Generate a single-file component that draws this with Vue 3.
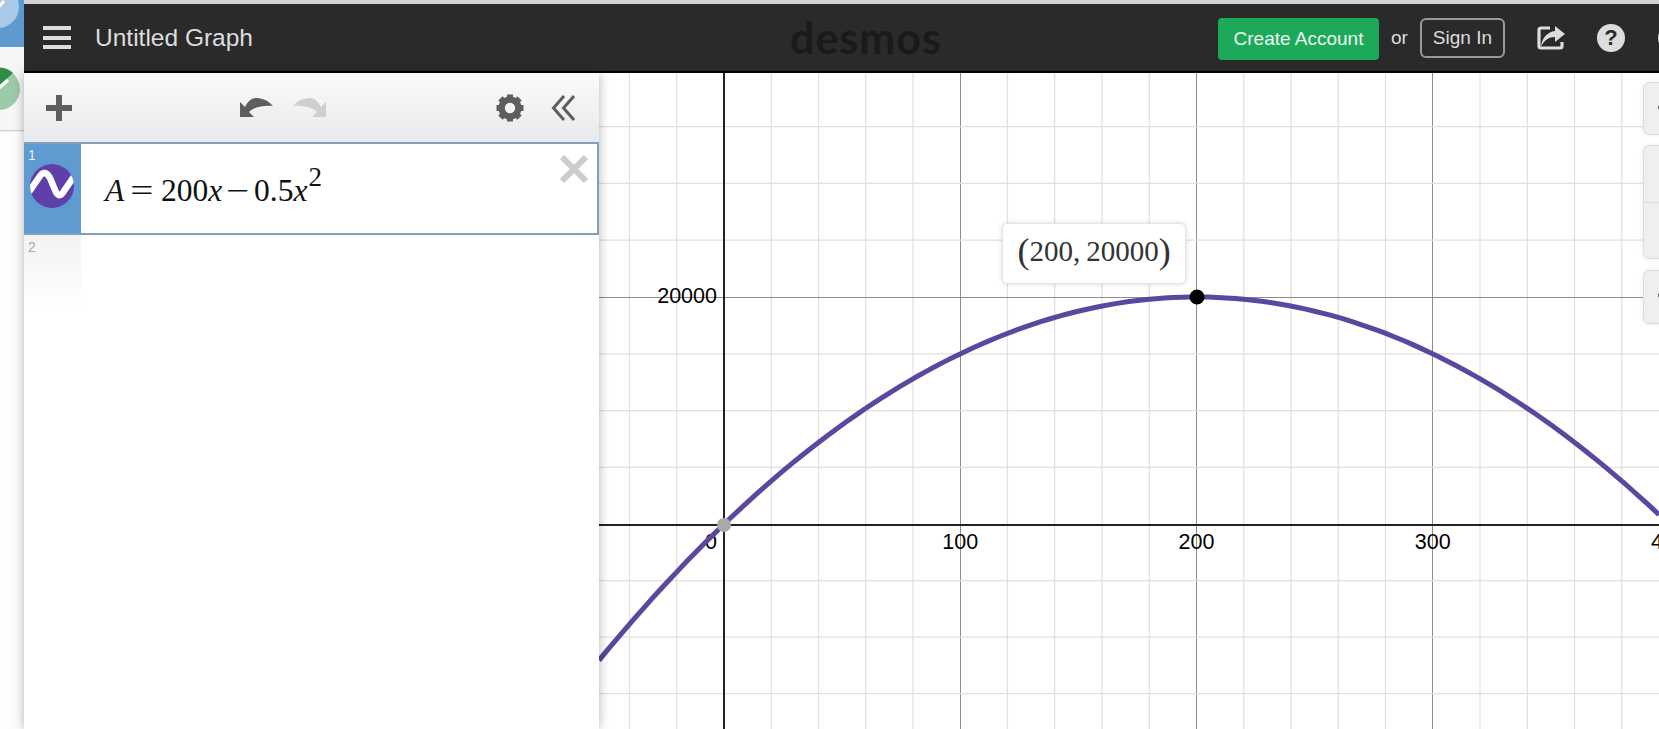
<script setup>
// graph paper is drawn in page coordinates, see the viewBox on the svg
const originX = 724
const originY = 524.2
const axisY = 525
const stepX = 47.25
const stepY = 56.8
const unitX = stepX / 20
const unitY = stepY / 5000

const range = (from, to) => {
  const out = []
  for (let i = from; i <= to; i++) out.push(i)
  return out
}

const vLines = range(-2, 20).filter(i => i !== 0).map(i => ({
  x: originX + i * stepX,
  major: i % 5 === 0
}))
const hLines = range(-3, 8).filter(i => i !== 0).map(i => ({
  y: originY - i * (i < 0 ? 56.5 : stepY),
  major: i % 4 === 0 && i > 0
}))

const xLabels = [100, 200, 300, 400].map(n => ({ n, x: originX + n * unitX }))

const curve = range(0, 120).map(i => {
  const px = 599 + (i / 120) * 1060
  const x = (px - originX) / unitX
  const a = 200 * x - 0.5 * x * x
  return px.toFixed(1) + ',' + (originY - a * unitY).toFixed(1)
}).join(' ')

const gearTeeth = [0, 45, 90, 135, 180, 225, 270, 315]
</script>

<template>
  <div class="app">
    <!-- neighbouring window, only a slice of it shows -->
    <svg class="strip" width="24" height="729" viewBox="0 0 24 729">
      <rect width="24" height="47" fill="#5e9ad0" />
      <rect y="47" width="24" height="84" fill="#f6f6f6" />
      <rect y="130" width="24" height="1.5" fill="#cfcfcf" />
      <rect y="131.5" width="24" height="598" fill="#fdfdfd" />
      <circle cx="-2" cy="7" r="21" fill="#a9c9e8" />
      <path d="M-2 8 L4 1" stroke="#fff" stroke-width="3" />
      <circle cx="-1" cy="89" r="21" fill="#9cc9a6" />
      <path d="M-14 72 A21 21 0 0 1 13 73 L-1 86 L-14 86 Z" fill="#2f8c47" />
      <path d="M-1 88 L8 80" stroke="#fff" stroke-width="3.5" />
    </svg>

    <div class="main">
      <header class="header">
        <div class="header-left">
          <div class="hamburger"><span></span><span></span><span></span></div>
          <span class="title">Untitled Graph</span>
        </div>
        <div class="logo">desmos</div>
        <div class="header-right">
          <button class="create">Create Account</button>
          <span class="or">or</span>
          <button class="signin">Sign In</button>
          <svg class="share" width="28" height="24" viewBox="0 0 28 24">
            <path d="M13 2 H4 Q2 2 2 4 V20 Q2 22 4 22 H23 Q25 22 25 20 V16" fill="none" stroke="#ddd" stroke-width="3.2" />
            <path d="M18 0 L28 8 L18 16 V11 C12 11 7 14 4 21 C5 12 10 6 18 5 Z" fill="#ddd" />
          </svg>
          <div class="help">?</div>
          <div class="user"></div>
        </div>
      </header>

      <div class="content">
        <aside class="panel">
          <div class="toolbar">
            <svg width="26" height="26" viewBox="0 0 26 26" class="add">
              <path d="M13 0 V26 M0 13 H26" stroke="#5e5e5e" stroke-width="6" />
            </svg>
            <div class="undo-redo">
              <svg width="33" height="20" viewBox="0 0 33 20">
                <path d="M0 4 L0 19 L14 19 L9 14 C14 9 24 7 33 8 C28 2 21 0 16 0 C12 0 8 3 5 9 Z" fill="#5e5e5e" />
              </svg>
              <svg class="redo" width="33" height="20" viewBox="0 0 33 20">
                <path d="M0 4 L0 19 L14 19 L9 14 C14 9 24 7 33 8 C28 2 21 0 16 0 C12 0 8 3 5 9 Z" fill="#cfcfcf" />
              </svg>
            </div>
            <svg class="gear" width="28" height="28" viewBox="-14 -14 28 28">
              <circle r="8.4" fill="none" stroke="#5e5e5e" stroke-width="6.4" />
              <rect v-for="a in gearTeeth" :key="a" x="-3" y="-13.5" width="6" height="6" fill="#5e5e5e" :transform="`rotate(${a})`" />
            </svg>
            <svg class="collapse" width="24" height="26" viewBox="0 0 24 26">
              <path d="M13 1 L2.5 13 L13 25 M23 1 L12.5 13 L23 25" fill="none" stroke="#5e5e5e" stroke-width="3" />
            </svg>
          </div>

          <div class="expr selected">
            <div class="gutter">
              <span class="num">1</span>
              <svg class="wave" width="44" height="44" viewBox="0 0 44 44">
                <defs>
                  <clipPath id="waveClip"><circle cx="22" cy="22" r="22" /></clipPath>
                </defs>
                <circle cx="22" cy="22" r="22" fill="#5f3fa8" />
                <path d="M-1 28 L10 12 Q15 5 20 14 L25 26 Q29 36 34 27 L45 11" fill="none" stroke="#fff" stroke-width="6.5" clip-path="url(#waveClip)" />
              </svg>
            </div>
            <div class="math">
              <i>A</i><span class="op">=</span><span>200</span><i>x</i><span class="op minus">−</span><span>0.5</span><i>x</i><sup>2</sup>
            </div>
            <svg class="close" width="28" height="28" viewBox="0 0 28 28">
              <path d="M2 2 L26 26 M26 2 L2 26" stroke="#cdcdcd" stroke-width="6" />
            </svg>
          </div>

          <div class="expr-empty">
            <div class="gutter-empty"><span class="num-empty">2</span></div>
          </div>
        </aside>

        <section class="graph">
          <svg class="paper" width="1060" height="656" viewBox="599 73 1060 656">
            <line v-for="l in vLines" :key="l.x" :class="{ major: l.major }" :x1="l.x" :x2="l.x" y1="73" y2="729" :stroke="l.major ? '#8c8c8c' : '#e0e0e0'" :stroke-width="l.major ? 1 : 1.2" />
            <line v-for="l in hLines" :key="l.y" :class="{ major: l.major }" x1="599" x2="1659" :y1="l.y" :y2="l.y" :stroke="l.major ? '#8c8c8c' : '#e0e0e0'" :stroke-width="l.major ? 1 : 1.2" />
            <line :x1="originX" :x2="originX" y1="73" y2="729" stroke="#222" stroke-width="2" />
            <line x1="599" x2="1659" :y1="axisY" :y2="axisY" stroke="#222" stroke-width="2" />

            <text class="tick" x="717" y="303" text-anchor="end">20000</text>
            <text class="tick" x="711" y="549" text-anchor="middle">0</text>
            <text v-for="t in xLabels" :key="t.n" class="tick" :x="t.x" y="549" text-anchor="middle">{{ t.n }}</text>

            <polyline :points="curve" fill="none" stroke="#5b479f" stroke-width="5" />
            <circle :cx="originX" :cy="axisY" r="7" fill="#a9a9a9" />
            <circle cx="1197" cy="297" r="7.5" fill="#000" />
          </svg>

          <div class="tooltip">
            <span class="paren">(</span>200,<span class="gap"></span>20000<span class="paren">)</span>
          </div>

          <div class="tool-group one"><span class="glyph"></span></div>
          <div class="tool-group two"><div></div><div></div></div>
          <div class="tool-group three"><span class="glyph"></span></div>
        </section>
      </div>
    </div>
  </div>
</template>

<style>
html, body {
  margin: 0;
  overflow: hidden;
  background: #fff;
}
</style>

<style scoped>
.app {
  display: flex;
  width: 1659px;
  height: 729px;
  overflow: hidden;
  font-family: "Liberation Sans", Arial, sans-serif;
}

.strip { flex: none; display: block; }

.main {
  flex: 1;
  min-width: 0;
  display: flex;
  flex-direction: column;
  border-top: 4px solid #d4d4d4;
}

/* header */
.header {
  flex: none;
  height: 67px;
  display: flex;
  align-items: center;
  background: #2a2a2a;
  border-bottom: 2px solid #000;
}

.header-left {
  flex: none;
  width: 766px;
  display: flex;
  align-items: center;
  padding-left: 19px;
  box-sizing: border-box;
  gap: 24px;
}

.hamburger {
  width: 28px;
  display: flex;
  flex-direction: column;
  gap: 5.5px;
}
.hamburger span { height: 4px; background: #ddd; }

.title {
  color: #ddd;
  font-size: 24.5px;
}

.logo {
  flex: none;
  width: 150px;
  color: #1a1a1a;
  font-family: Lato, sans-serif;
  font-size: 43px;
  font-weight: 700;
  line-height: 44px;
  letter-spacing: 1px;
  text-align: center;
}

.header-right {
  flex: none;
  display: flex;
  align-items: center;
  padding-left: 278px;
}

.create {
  flex: none;
  width: 161px;
  height: 42px;
  padding: 0;
  margin-top: 2px;
  background: #1ca95a;
  border: none;
  border-radius: 4px;
  color: #eef8f1;
  font: 19px "Liberation Sans", Arial, sans-serif;
}

.or {
  color: #ddd;
  font-size: 19px;
  margin: 0 12px;
}

.signin {
  flex: none;
  width: 85px;
  height: 40px;
  padding: 0;
  background: transparent;
  border: 2px solid #999;
  border-radius: 6px;
  color: #ddd;
  font: 19px "Liberation Sans", Arial, sans-serif;
}

.share { margin-left: 32px; flex: none; }

.help {
  flex: none;
  width: 28px;
  height: 28px;
  margin-left: 32px;
  border-radius: 50%;
  background: #ddd;
  color: #2a2a2a;
  font-size: 22px;
  font-weight: 700;
  line-height: 28px;
  text-align: center;
}

.user {
  flex: none;
  width: 28px;
  height: 28px;
  margin-left: 33px;
  border-radius: 50%;
  background: #ddd;
}

/* left panel */
.content {
  flex: 1;
  min-height: 0;
  display: flex;
}

.panel {
  flex: none;
  position: relative;
  z-index: 2;
  width: 575px;
  background: #fff;
  box-shadow: 0 0 10px rgba(0, 0, 0, 0.3);
}

.toolbar {
  height: 69px;
  display: flex;
  align-items: center;
  background: linear-gradient(#fbfbfb, #e8e9ec);
}

.add { margin-left: 22px; flex: none; }

.undo-redo {
  flex: none;
  display: flex;
  gap: 20px;
  margin-left: 168px;
}
.redo { transform: scaleX(-1); }

.gear { margin-left: 170px; flex: none; }
.collapse { margin-left: 27px; flex: none; }

.expr {
  position: relative;
  height: 93px;
  display: flex;
  box-sizing: border-box;
  border: solid #7f9fbb;
  border-width: 2px 2px 2px 0;
}

.gutter {
  position: relative;
  flex: none;
  width: 57px;
  background: #5f9bd1;
}

.num {
  position: absolute;
  top: 3px;
  left: 4px;
  color: #e4eef8;
  font-size: 14px;
}

.wave {
  position: absolute;
  top: 20px;
  left: 6px;
}

.math {
  margin-left: 24px;
  align-self: flex-end;
  margin-bottom: 25px;
  font-family: "Liberation Serif", "Times New Roman", serif;
  font-size: 31.5px;
  line-height: 34px;
  color: #111;
  white-space: nowrap;
}
.math i { font-style: italic; }
.math .op {
  display: inline-block;
  margin: 0 10px 0 9px;
  transform: scaleX(1.3);
}
.math .minus { margin: 0 7px; }
.math sup {
  font-size: 27px;
  line-height: 0;
  vertical-align: 15px;
  margin-left: 1px;
}

.close {
  position: absolute;
  top: 11px;
  right: 9px;
}

.expr-empty {
  height: 75px;
  display: flex;
}

.gutter-empty {
  width: 57px;
  background: linear-gradient(#f3f3f3, #fff);
}

.num-empty {
  display: block;
  padding: 4px 0 0 4px;
  color: #aaa;
  font-size: 14px;
}

/* graph */
.graph {
  position: relative;
  flex: 1;
  min-width: 0;
  overflow: hidden;
  background: #fff;
}

.paper { display: block; }
.major { shape-rendering: crispEdges; }

.tick {
  font-family: "Liberation Sans", Arial, sans-serif;
  font-size: 21.5px;
  fill: #000;
}

.tooltip {
  position: absolute;
  left: 403px;
  top: 150px;
  width: 184px;
  height: 61px;
  box-sizing: border-box;
  padding-bottom: 5px;
  display: flex;
  align-items: center;
  justify-content: center;
  background: #fff;
  border: 1px solid #e4e4e4;
  border-radius: 5px;
  box-shadow: 0 0 5px rgba(0, 0, 0, 0.15);
  font-family: "Liberation Serif", "Times New Roman", serif;
  font-size: 29px;
  color: #333;
}
.paren { font-size: 36px; line-height: 36px; }
.gap { width: 6px; }

.tool-group {
  position: absolute;
  right: -8px;
  width: 24px;
  box-sizing: border-box;
  background: #efefef;
  border: 1.5px solid #dcdcdc;
  border-radius: 6px;
  box-shadow: 0 0 4px rgba(0, 0, 0, 0.08);
}
.one { top: 9px; height: 53px; }
.two { top: 72px; height: 114px; display: flex; flex-direction: column; }
.two div { flex: 1; }
.two div + div { border-top: 1.5px solid #dcdcdc; }
.three { top: 197px; height: 54px; }

.glyph {
  position: absolute;
  left: 14px;
  top: 22px;
  width: 5px;
  height: 5px;
  border-radius: 50%;
  background: #555;
}
</style>
